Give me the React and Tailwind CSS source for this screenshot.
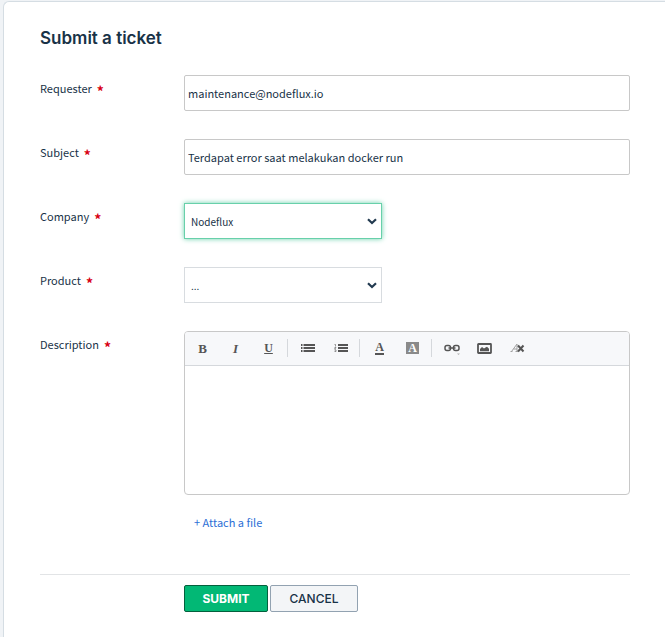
import clsx from "clsx";

const ICON = "#555555";

const Required = () => (
    <span
        className="ml-[5px] inline-block align-[-4px] text-sm leading-none font-bold text-[#d80013]"
        aria-hidden="true"
    >
        *
    </span>
);

const Field = ({ id, label, children }) => (
    <div className="flex items-start">
        <label
            htmlFor={id}
            className="w-36 shrink-0 pt-[3px] text-[11px] leading-5"
        >
            {label}
            <Required />
        </label>
        <div className="min-w-0 flex-1">{children}</div>
    </div>
);

const TextInput = ({ id, value }) => (
    <input
        id={id}
        type="text"
        defaultValue={value}
        className="block h-9 w-full rounded-xs border border-[#c8c8c8] bg-white px-[3px] text-[11px] outline-none"
    />
);

const Select = ({ id, options, active }) => (
    <div className="relative w-[198px]">
        <select
            id={id}
            className={clsx(
                "block h-9 w-full appearance-none border bg-white pr-6 pl-1.5 text-[10px] outline-none",
                active
                    ? "border-[#68d0aa] shadow-[0_0_5px_#68d0aa]"
                    : "border-[#d8dce0]",
            )}
        >
            {options.map((option) => (
                <option key={option}>{option}</option>
            ))}
        </select>
        <svg
            className="pointer-events-none absolute top-[15px] right-1 h-[7px] w-3"
            viewBox="0 0 12 7"
            fill="none"
            stroke="#223a50"
            strokeWidth="2.2"
        >
            <path d="M2 1.2 6 5l4-3.8" />
        </svg>
    </div>
);

const BulletListIcon = () => (
    <svg width="14" height="8" viewBox="0 0 14 8" fill={ICON}>
        <path d="M0 0h1.5v2H0zM0 3h1.5v2H0zM0 6h1.5v2H0zM2.5 0H14v2H2.5zM2.5 3H14v2H2.5zM2.5 6H14v2H2.5z" />
    </svg>
);

const NumberListIcon = () => (
    <svg width="14" height="8" viewBox="0 0 14 8" fill={ICON}>
        <path d="M4 0h10v2H4zM4 3h10v2H4zM4 6h10v2H4z" />
        <path
            d="M.5.5h1v2M.5 3.5h1.5L.5 5H2M.5 6h1.5v1.5H.5"
            fill="none"
            stroke={ICON}
            strokeWidth=".6"
        />
    </svg>
);

const LinkIcon = () => (
    <svg width="16" height="16" viewBox="0 0 16 16" fill="none" stroke={ICON}>
        <rect x="1" y="5.5" width="5.5" height="5" rx="2" strokeWidth="1.5" />
        <rect x="9.5" y="5.5" width="5.5" height="5" rx="2" strokeWidth="1.5" />
        <path d="M4.5 8h7" strokeWidth="1.5" />
        <path d="M13 13.5h3L14.5 15z" fill="#b0b0b0" stroke="none" />
    </svg>
);

const ImageIcon = () => (
    <svg width="15" height="11" viewBox="0 0 15 11">
        <rect
            x="1"
            y="1"
            width="13"
            height="9"
            rx=".5"
            fill="none"
            stroke={ICON}
            strokeWidth="1.8"
        />
        <path d="M3 8.3V6l2-2 2 1.5L8.500 4.5 10 3.7l2 2v2.6z" fill={ICON} />
    </svg>
);

const ClearFormatIcon = () => (
    <svg width="15" height="10" viewBox="0 0 15 10" fill="none">
        <path
            d="M.5 8.5h2M1.5 8.5 7 1v7.5M3.5 6H7M5.5 8.5H8"
            stroke="#a0a0a0"
        />
        <path d="m8 2.5 5.5 6M13.5 2.5 8 8.5" stroke={ICON} strokeWidth="2" />
    </svg>
);

const glyph = "font-['Liberation_Serif',serif] leading-none";

const toolGroups = [
    [
        {
            name: "Bold",
            icon: <span className={clsx(glyph, "text-[13px] font-bold")}>B</span>,
        },
        {
            name: "Italic",
            icon: (
                <span className={clsx(glyph, "text-[13px] font-bold italic")}>
                    I
                </span>
            ),
        },
        {
            name: "Underline",
            icon: (
                <span className={clsx(glyph, "text-xs font-bold underline")}>
                    U
                </span>
            ),
        },
    ],
    [
        { name: "Bulleted list", icon: <BulletListIcon /> },
        { name: "Numbered list", icon: <NumberListIcon /> },
    ],
    [
        {
            name: "Text color",
            icon: (
                <span
                    className={clsx(
                        glyph,
                        "border-b-2 border-[#555555] text-xs leading-[9px] font-bold",
                    )}
                >
                    A
                </span>
            ),
        },
        {
            name: "Background color",
            icon: (
                <span
                    className={clsx(
                        glyph,
                        "w-[13px] bg-[#8a8a8a] text-xs leading-[11px] font-bold text-white",
                    )}
                >
                    A
                </span>
            ),
        },
    ],
    [
        { name: "Insert link", icon: <LinkIcon /> },
        { name: "Insert image", icon: <ImageIcon /> },
        { name: "Clear formatting", icon: <ClearFormatIcon /> },
    ],
];

const Toolbar = () => (
    <div className="flex h-[34px] items-center border-b border-[#d5d8dc] bg-[#f7f8fa] pb-px pl-px">
        {toolGroups.map((tools, index) => (
            <div key={index} className="flex items-center">
                {index > 0 && (
                    <span className="mr-[3px] ml-0.5 h-[18px] w-px bg-[#d5d8dc]" />
                )}
                {tools.map((tool) => (
                    <button
                        key={tool.name}
                        type="button"
                        aria-label={tool.name}
                        className="flex h-[30px] w-[33px] items-center justify-center text-[#555555]"
                    >
                        {tool.icon}
                    </button>
                ))}
            </div>
        ))}
    </div>
);

const App = () => {
    return (
        <div className="min-h-screen bg-[#f0f3f6] pt-px pl-[3px] font-['Noto_Sans_CJK_JP',sans-serif] text-[#183247]">
            <main className="min-h-screen rounded-tl-md border-t border-l border-[#d5dde3] bg-white pt-6 pr-[35px] pl-9">
                <h1 className="font-[Inter,sans-serif] text-[17px] leading-6 font-semibold">
                    Submit a ticket
                </h1>

                <form onSubmit={(e) => e.preventDefault()}>
                    <div className="mt-[25px] flex flex-col gap-7">
                        <Field id="requester" label="Requester">
                            <TextInput
                                id="requester"
                                value="maintenance@nodeflux.io"
                            />
                        </Field>
                        <Field id="subject" label="Subject">
                            <TextInput
                                id="subject"
                                value="Terdapat error saat melakukan docker run"
                            />
                        </Field>
                        <Field id="company" label="Company">
                            <Select
                                id="company"
                                options={["Nodeflux"]}
                                active
                            />
                        </Field>
                        <Field id="product" label="Product">
                            <Select id="product" options={["..."]} />
                        </Field>
                        <Field id="description" label="Description">
                            <div className="overflow-hidden rounded-sm border border-[#c8c8c8]">
                                <Toolbar />
                                <textarea
                                    id="description"
                                    className="block h-32 w-full resize-none p-2 text-[11px] outline-none"
                                />
                            </div>
                            <button
                                type="button"
                                className="mt-[17px] ml-2.5 block text-[11px] leading-5 text-[#2c6fd6]"
                            >
                                + Attach a file
                            </button>
                        </Field>
                    </div>

                    <div className="mt-[42px] flex gap-0.5 border-t border-[#e2e4e6] pt-2.5 pl-36 font-[Inter,sans-serif] text-xs leading-none">
                        <button
                            type="submit"
                            className="h-[27px] w-21 rounded-xs border border-[#04603d] bg-[#02b875] font-bold text-white"
                        >
                            SUBMIT
                        </button>
                        <button
                            type="button"
                            className="h-[27px] w-22 rounded-xs border border-[#92a2b1] bg-[#f3f5f7] font-medium"
                        >
                            CANCEL
                        </button>
                    </div>
                </form>
            </main>
        </div>
    );
};

export default App;
